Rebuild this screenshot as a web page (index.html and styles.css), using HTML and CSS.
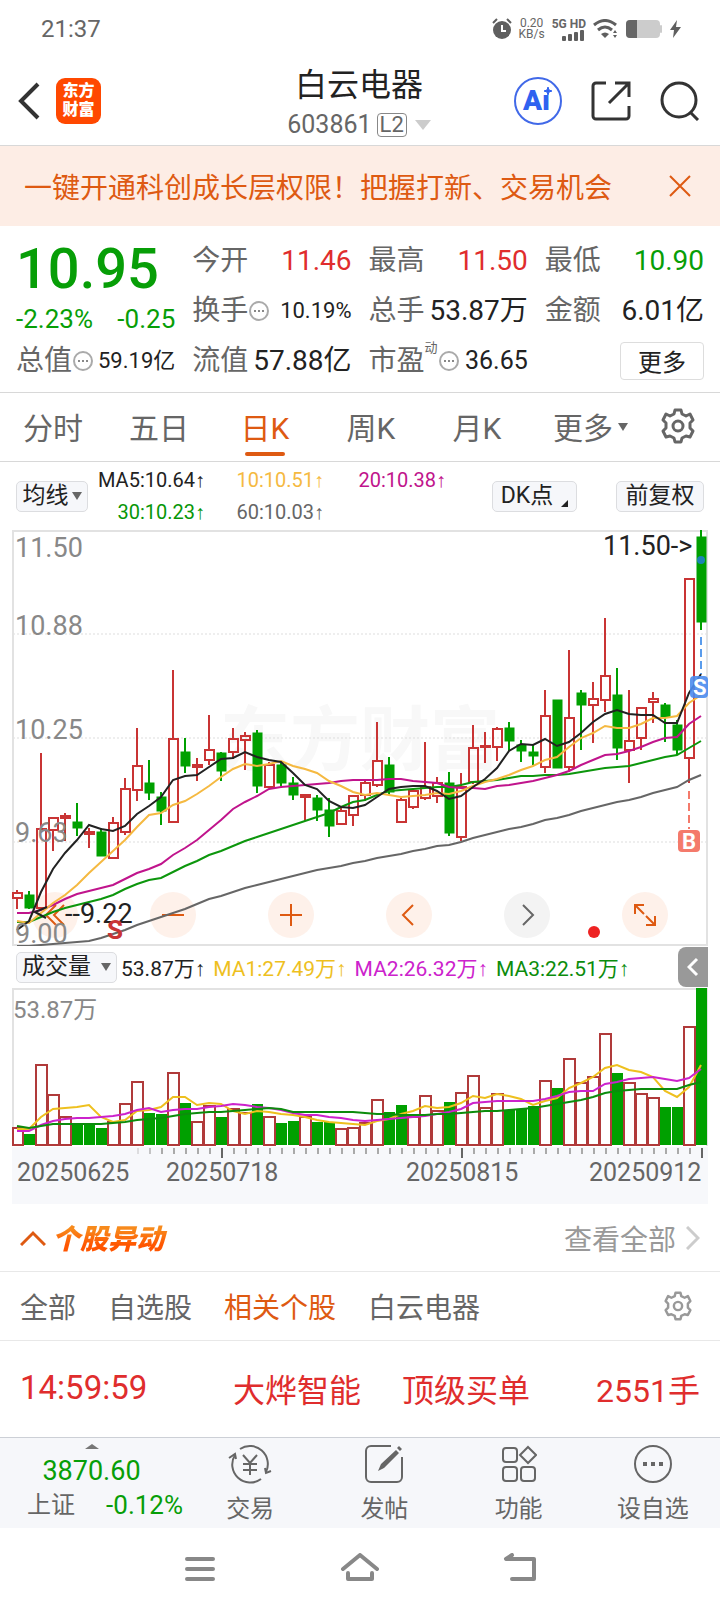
FILE: index.html
```html
<!DOCTYPE html>
<html lang="zh-CN">
<head>
    <meta charset="UTF-8">
    <meta name="viewport" content="width=device-width, initial-scale=1.0">
    <title>白云电器 603861</title>
    <link rel="stylesheet" href="styles.css">
</head>
<body>
    <div class="status-bar">
        <span class="clock">21:37</span>
        <div class="status-icons">
            <svg width="20" height="22" viewBox="0 0 20 22">
                <circle cx="10" cy="12" r="9" fill="#5f5f5f"/>
                <path d="M1 5l4-4M19 5l-4-4" stroke="#5f5f5f" stroke-width="2" fill="none"/>
                <path d="M10 7v6h4" stroke="#fff" stroke-width="2" fill="none"/>
            </svg>
            <span class="speed">0.20<br>KB/s</span>
            <span class="network">5G HD
                <svg width="25" height="11" viewBox="0 0 25 11" fill="#5f5f5f">
                    <rect x="1" y="6" width="4" height="5" rx="1"/>
                    <rect x="7" y="4" width="4" height="7" rx="1"/>
                    <rect x="13" y="2" width="4" height="9" rx="1"/>
                    <rect x="19" y="0" width="4" height="11" rx="1"/>
                </svg>
            </span>
            <svg width="26" height="20" viewBox="0 0 26 20" fill="none" stroke="#5f5f5f" stroke-width="3">
                <path d="M1 6q11-9 22 0"/>
                <path d="M5 11q7-6 14 0"/>
                <path d="M8 15q4-3 8 0l-4 4z" fill="#5f5f5f" stroke="none"/>
                <path d="M22 11l2 3h-4zM22 19l2-3h-4z" fill="#5f5f5f" stroke="none"/>
            </svg>
            <svg width="37" height="18" viewBox="0 0 37 18">
                <rect x="0" y="0" width="34" height="18" rx="4" fill="#ccc"/>
                <rect x="34" y="5" width="2" height="8" rx="1" fill="#ccc"/>
                <path d="M4 0h7v18H4a4 4 0 0 1-4-4V4a4 4 0 0 1 4-4z" fill="#666"/>
            </svg>
            <svg width="11" height="18" viewBox="0 0 11 18"><path d="M7 0L0 10h4l-1 8 8-11H6z" fill="#5f5f5f"/></svg>
        </div>
    </div>

    <header class="header">
        <div class="header-left">
            <button class="icon-button" aria-label="返回">
                <svg width="22" height="38" viewBox="0 0 22 38"><path d="M20 2L3 19l17 17" fill="none" stroke="#333" stroke-width="4"/></svg>
            </button>
            <a class="logo" href="#">东方<br>财富</a>
        </div>
        <div class="stock">
            <h1 class="stock-name">白云电器</h1>
            <button class="stock-code">603861<span class="level">L2</span><span class="triangle light"></span></button>
        </div>
        <div class="header-right">
            <button class="icon-button ai" aria-label="Ai">
                <svg width="48" height="48" viewBox="0 0 48 48">
                    <circle cx="24" cy="24" r="23" fill="#fff" stroke="#4169e8" stroke-width="2"/>
                    <text x="9" y="33" class="ai-text">Aı</text>
                    <path d="M34 10l1 3 3 1-3 1-1 3-1-3-3-1 3-1z" fill="#2f62f0" stroke="#2f62f0"/>
                </svg>
            </button>
            <button class="icon-button" aria-label="分享">
                <svg width="40" height="40" viewBox="0 0 40 40" fill="none" stroke="#333" stroke-width="3">
                    <path d="M15 2H5a3 3 0 0 0-3 3v30a3 3 0 0 0 3 3h30a3 3 0 0 0 3-3V25"/>
                    <path d="M24 2h14v14M37 3L18 22"/>
                </svg>
            </button>
            <button class="icon-button" aria-label="搜索">
                <svg width="40" height="40" viewBox="0 0 40 40" fill="none" stroke="#333" stroke-width="3">
                    <circle cx="19" cy="19" r="17"/>
                    <path d="M30 31l8 8"/>
                </svg>
            </button>
        </div>
    </header>

    <div class="banner">
        <a href="#">一键开通科创成长层权限！把握打新、交易机会</a>
        <button class="icon-button" aria-label="关闭">
            <svg width="24" height="24" viewBox="0 0 24 24"><path d="M2 2l20 20M22 2L2 22" stroke="#de5a12" stroke-width="2"/></svg>
        </button>
    </div>

    <section class="quote">
        <div class="price">
            <strong class="last">10.95</strong>
            <div class="change"><span>-2.23%</span><span>-0.25</span></div>
        </div>
        <div class="item"><span>今开</span><b class="up">11.46</b></div>
        <div class="item"><span>最高</span><b class="up">11.50</b></div>
        <div class="item"><span>最低</span><b class="down">10.90</b></div>
        <div class="item"><span>换手<i class="info"></i></span><b class="small">10.19%</b></div>
        <div class="item"><span>总手</span><b>53.87万</b></div>
        <div class="item"><span>金额</span><b>6.01亿</b></div>
        <div class="item"><span>总值<i class="info"></i></span><b class="small">59.19亿</b></div>
        <div class="item"><span>流值</span><b>57.88亿</b></div>
        <div class="item"><span>市盈<sup>动</sup><i class="info"></i></span><b class="medium">36.65</b></div>
        <div class="item end"><button class="more-button">更多</button></div>
    </section>

    <nav class="tabs">
        <button class="tab">分时</button>
        <button class="tab">五日</button>
        <button class="tab active">日K</button>
        <button class="tab">周K</button>
        <button class="tab">月K</button>
        <button class="tab">更多<span class="triangle tiny"></span></button>
        <button class="icon-button tab-setting" aria-label="设置">
            <svg width="34" height="36" viewBox="0 0 34 36" fill="none" stroke="#666" stroke-width="3" stroke-linejoin="round">
                <path d="M14 2h6l1 4 4 2 4-2 3 6-3 3v5l3 3-3 6-4-1-4 2-1 4h-6l-1-4-4-2-4 1-3-6 3-3v-5l-3-3 3-6 4 2 4-2z"/>
                <circle cx="17" cy="18" r="5"/>
            </svg>
        </button>
    </nav>

    <div class="ma-bar">
        <label class="picker">
            <select aria-label="指标"><option>均线</option></select>
            <span class="triangle"></span>
        </label>
        <div class="ma-values">
            <span class="ma5">MA5:10.64↑</span>
            <span class="ma10">10:10.51↑</span>
            <span class="ma20">20:10.38↑</span>
            <span class="ma30">30:10.23↑</span>
            <span class="ma60">60:10.03↑</span>
        </div>
        <button class="box-button dk">DK点<span class="corner"></span></button>
        <button class="box-button">前复权</button>
    </div>

    <div class="chart">
        <div class="controls">
            <button class="control" aria-label="最早">
                <svg width="22" height="22" viewBox="0 0 22 22"><path d="M12 1L2 11l10 10M20 1L10 11l10 10"/></svg>
            </button>
            <button class="control" aria-label="缩小">
                <svg width="22" height="22" viewBox="0 0 22 22"><path d="M0 11h22"/></svg>
            </button>
            <button class="control" aria-label="放大">
                <svg width="22" height="22" viewBox="0 0 22 22"><path d="M0 11h22M11 0v22"/></svg>
            </button>
            <button class="control" aria-label="左移">
                <svg width="22" height="22" viewBox="0 0 22 22"><path d="M15 1L5 11l10 10"/></svg>
            </button>
            <button class="control gray" aria-label="右移">
                <svg width="22" height="22" viewBox="0 0 22 22"><path d="M7 1l10 10L7 21"/></svg>
            </button>
            <button class="control" aria-label="全屏">
                <svg width="22" height="22" viewBox="0 0 22 22"><path d="M1 10V1h9M1 1l9 9M12 21h9v-9M21 21l-9-9"/></svg>
            </button>
        </div>
        <svg class="plot k-plot" viewBox="0 0 696 416">
            <text class="watermark" x="208" y="235">东方财富</text>
            <path class="grid" d="M1 104H694M1 208H694M1 312H694"/>
            <path class="frame" d="M1 416V1H695V415H1"/>
            <g id="candles"></g>
            <g id="ma-lines"></g>
            <g class="axis-label">
                <text x="3" y="27">11.50</text>
                <text x="3" y="105">10.88</text>
                <text x="3" y="209">10.25</text>
                <text x="3" y="312">9.63</text>
                <text x="3" y="413">9.00</text>
            </g>
            <text class="mark" x="591" y="25">11.50-&gt;</text>
            <text class="mark" x="53" y="393">--9.22</text>
            <path d="M35 377l-12 5 11 6" fill="none" stroke="#222" stroke-width="2"/>
            <text class="s-mark" x="95" y="409">S</text>
            <circle cx="689" cy="30" r="4" fill="#1c84b4"/>
            <path d="M689 107v37" stroke="#5a9cec" stroke-width="2" stroke-dasharray="8 4"/>
            <rect x="678" y="146" width="18" height="22" rx="4" fill="#4a8cee" fill-opacity=".9"/>
            <text class="tag" x="681" y="165">S</text>
            <path d="M677 261v38" stroke="#f47a6b" stroke-width="2" stroke-dasharray="8 4"/>
            <rect x="666" y="300" width="22" height="22" rx="4" fill="#f47a6b"/>
            <text class="tag" x="670" y="319">B</text>
            <circle cx="582" cy="402" r="6" fill="#ee2222"/>
        </svg>
    </div>

    <div class="volume-bar">
        <label class="picker wide">
            <select aria-label="副图"><option>成交量</option></select>
            <span class="triangle"></span>
        </label>
        <span>53.87万↑</span>
        <span class="vol1">MA1:27.49万↑</span>
        <span class="vol2">MA2:26.32万↑</span>
        <span class="vol3">MA3:22.51万↑</span>
        <button class="collapse" aria-label="展开">
            <svg width="12" height="20" viewBox="0 0 12 20"><path d="M10 2L2 10l8 8" fill="none" stroke="#fff" stroke-width="3"/></svg>
        </button>
    </div>

    <div class="volume">
        <svg class="plot" viewBox="0 0 696 216">
            <rect x="0" y="159" width="696" height="57" fill="#f7f8fb"/>
            <path class="frame" d="M1 158V1H695V158"/>
            <text class="vol-label" x="1" y="30">53.87万</text>
            <g id="volumes"></g>
            <g id="vol-lines"></g>
            <g id="ticks"></g>
            <g class="date">
                <text x="5" y="193">20250625</text>
                <text x="154" y="193">20250718</text>
                <text x="394" y="193">20250815</text>
                <text x="577" y="193">20250912</text>
            </g>
        </svg>
    </div>

    <div class="section-head">
        <svg width="26" height="16" viewBox="0 0 26 16"><path d="M1 15L13 3l12 12" fill="none" stroke="#de5a12" stroke-width="3"/></svg>
        <h2 class="section-title">个股异动</h2>
        <a class="view-all" href="#">查看全部
            <svg width="14" height="24" viewBox="0 0 14 24"><path d="M1 1l11 11L1 23" fill="none" stroke="#ccc" stroke-width="3"/></svg>
        </a>
    </div>

    <nav class="filters">
        <button>全部</button>
        <button>自选股</button>
        <button class="active">相关个股</button>
        <button>白云电器</button>
        <button class="icon-button filter-setting" aria-label="设置">
            <svg width="28" height="30" viewBox="0 0 34 36" fill="none" stroke="#999" stroke-width="3" stroke-linejoin="round">
                <path d="M14 2h6l1 4 4 2 4-2 3 6-3 3v5l3 3-3 6-4-1-4 2-1 4h-6l-1-4-4-2-4 1-3-6 3-3v-5l-3-3 3-6 4 2 4-2z"/>
                <circle cx="17" cy="18" r="5"/>
            </svg>
        </button>
    </nav>

    <div class="trade">
        <span class="time">14:59:59</span>
        <span>大烨智能</span>
        <span>顶级买单</span>
        <span>2551手</span>
    </div>

    <footer class="footer">
        <a class="index" href="#">
            <span class="triangle upward"></span>
            <span class="index-value">3870.60</span>
            <span class="index-row"><span class="index-name">上证</span><span>-0.12%</span></span>
        </a>
        <a class="action" href="#">
            <svg width="44" height="40" viewBox="0 0 44 40" fill="none" stroke="#666" stroke-width="2">
                <path d="M12 5a18 18 0 0 1 26 23M33 35A18 18 0 0 1 7 11"/>
                <path d="M1 14l6-4 1 5M43 27l-5 2-1-5"/>
                <path d="M15 11l7 8 7-8M22 19v12M15 20h14M15 26h14"/>
            </svg>
            交易
        </a>
        <a class="action" href="#">
            <svg width="40" height="40" viewBox="0 0 40 40" fill="none" stroke="#666" stroke-width="2">
                <path d="M27 2H7a5 5 0 0 0-5 5v26a5 5 0 0 0 5 5h26a5 5 0 0 0 5-5V13"/>
                <path d="M14 27l3-7L32 6l3 3-15 15zM33 4l2-2 3 3-2 2z" fill="#666" stroke="none"/>
            </svg>
            发帖
        </a>
        <a class="action" href="#">
            <svg width="36" height="40" viewBox="0 0 36 40" fill="none" stroke="#666" stroke-width="2">
                <rect x="2" y="4" width="14" height="14" rx="3"/>
                <rect x="2" y="23" width="14" height="14" rx="3"/>
                <rect x="20" y="23" width="14" height="14" rx="3"/>
                <path d="M27 3l8 8-8 8-8-8z"/>
            </svg>
            功能
        </a>
        <a class="action" href="#">
            <svg width="40" height="40" viewBox="0 0 40 40" fill="none" stroke="#666" stroke-width="2">
                <circle cx="20" cy="20" r="18"/>
                <path d="M10 20h4M18 20h4M26 20h4" stroke-width="4"/>
            </svg>
            设自选
        </a>
    </footer>

    <div class="system-nav">
        <button class="icon-button" aria-label="菜单">
            <svg width="40" height="32" viewBox="0 0 40 32" stroke="#888" stroke-width="4" stroke-linecap="round"><path d="M7 6h26M7 16h26M7 26h26"/></svg>
        </button>
        <button class="icon-button" aria-label="主页">
            <svg width="40" height="32" viewBox="0 0 40 32" fill="none" stroke="#888" stroke-width="4" stroke-linecap="round" stroke-linejoin="round">
                <path d="M3 16L20 2l17 14M8 20v6h24v-6"/>
            </svg>
        </button>
        <button class="icon-button" aria-label="后退">
            <svg width="40" height="32" viewBox="0 0 40 32" fill="none" stroke="#888" stroke-width="4" stroke-linecap="round" stroke-linejoin="round">
                <path d="M12 2L6 6h28v20H12"/>
            </svg>
        </button>
    </div>

    <script src="chart.js"></script>
</body>
</html>
```
FILE: styles.css
```css
* {
    box-sizing: border-box;
}
body {
    font-family: Roboto, "Liberation Sans", "Noto Sans CJK SC", sans-serif;
    margin: 0;
    color: #222;
    background-color: #ffffff;
}
button, select {
    font-family: inherit;
    color: inherit;
    background: none;
    border: none;
    padding: 0;
    cursor: pointer;
}
a {
    color: inherit;
    text-decoration: none;
}
svg {
    display: block;
}
.icon-button {
    display: flex;
    align-items: center;
    justify-content: center;
}
.triangle {
    display: inline-block;
    border: 5px solid transparent;
    border-top: 8px solid #666;
    border-bottom: none;
}
.triangle.light {
    border-width: 10px 8px 0;
    border-top-color: #ccc;
    margin-left: 8px;
}
.triangle.tiny {
    position: absolute;
    right: 8px;
    top: 30px;
}
.triangle.upward {
    border: 7px solid transparent;
    border-top: none;
    border-bottom: 5px solid #777;
}

/* status bar */
.status-bar {
    display: flex;
    justify-content: space-between;
    align-items: center;
    height: 56px;
    padding: 2px 39px 0 41px;
    color: #666;
}
.clock {
    font-size: 24px;
}
.status-icons {
    display: flex;
    align-items: center;
    gap: 7px;
}
.speed {
    font-size: 12px;
    line-height: 11px;
    text-align: center;
}
.network {
    display: flex;
    flex-direction: column;
    align-items: flex-end;
    font-size: 12px;
    font-weight: bold;
    line-height: 12px;
}

/* header */
.header {
    display: grid;
    grid-template-columns: 1fr auto 1fr;
    align-items: center;
    height: 90px;
    padding: 0 20px 0 18px;
    border-bottom: 1px solid #d8d8d8;
}
.header-left {
    display: flex;
    align-items: center;
    gap: 16px;
}
.logo {
    width: 45px;
    height: 46px;
    padding-top: 3px;
    border-radius: 9px;
    background-color: #ff4800;
    color: white;
    font-size: 16px;
    font-weight: 900;
    line-height: 19px;
    text-align: center;
}
.stock {
    padding-top: 6px;
    text-align: center;
}
.stock-name {
    margin: 0;
    font-size: 32px;
    font-weight: normal;
    line-height: 42px;
}
.stock-code {
    display: flex;
    align-items: center;
    font-size: 25px;
    line-height: 38px;
    color: #666;
}
.level {
    margin-left: 5px;
    padding: 0 2px;
    border: 1px solid #888;
    border-radius: 4px;
    font-size: 22px;
    line-height: 22px;
}
.header-right {
    display: flex;
    justify-content: flex-end;
    align-items: center;
    gap: 29px;
}
.ai-text {
    font-size: 28px;
    font-weight: 900;
    fill: #2f62f0;
}

/* banner */
.banner {
    display: flex;
    justify-content: space-between;
    align-items: center;
    height: 80px;
    padding: 0 28px 0 24px;
    background-color: #fdede5;
    color: #de5a12;
    font-size: 28px;
}

/* quote */
.quote {
    display: grid;
    grid-template-columns: repeat(4, 1fr);
    grid-auto-rows: 50px;
    column-gap: 17px;
    padding: 10px 16px 6px;
    border-bottom: 1px solid #d8d8d8;
}
.price {
    grid-row: span 2;
    color: #079e07;
}
.last {
    display: block;
    font-size: 56px;
    font-weight: 500;
    line-height: 67px;
}
.change {
    display: flex;
    justify-content: space-between;
    font-size: 26px;
    line-height: 32px;
}
.item {
    display: flex;
    justify-content: space-between;
    align-items: center;
    white-space: nowrap;
    font-size: 28px;
    line-height: 40px;
    color: #666;
}
.item > span {
    display: flex;
    align-items: center;
}
.item b {
    font-weight: normal;
    color: #222;
}
.item .up {
    color: #e02d2d;
}
.item .down {
    color: #079e07;
}
.item .medium {
    font-size: 25px;
}
.item .small {
    font-size: 22px;
}
.item.end {
    justify-content: flex-end;
}
.item sup {
    align-self: flex-start;
    font-size: 13px;
    line-height: 14px;
}
.info {
    display: flex;
    align-items: center;
    justify-content: center;
    width: 20px;
    height: 20px;
    margin-left: 1px;
    border: 2px solid #aaa;
    border-radius: 50%;
}
.info::before {
    content: "";
    width: 2px;
    height: 2px;
    background-color: #888;
    box-shadow: -4px 0 #888, 4px 0 #888;
}
.more-button {
    width: 84px;
    height: 38px;
    padding-bottom: 4px;
    border: 1px solid #ddd;
    border-radius: 4px;
    font-size: 24px;
    color: #222;
}

/* period tabs */
.tabs {
    display: flex;
    height: 69px;
    border-bottom: 1px solid #d8d8d8;
}
.tab {
    position: relative;
    flex: 1;
    padding-bottom: 2px;
    font-size: 30px;
    color: #666;
}
.tab.active {
    color: #de5a12;
}
.tab.active::after {
    content: "";
    position: absolute;
    left: 50%;
    bottom: 5px;
    width: 40px;
    height: 4px;
    margin-left: -20px;
    border-radius: 2px;
    background-color: #de5a12;
}
.tab-setting {
    width: 84px;
    padding-bottom: 2px;
}

/* moving averages */
.ma-bar {
    display: flex;
    align-items: center;
    height: 68px;
    padding: 0 16px;
}
.picker, .box-button {
    display: flex;
    flex-shrink: 0;
    align-items: center;
    justify-content: center;
    height: 31px;
    border: 1px solid #dcdde0;
    border-radius: 5px;
    background-color: #f6f7fa;
    font-size: 23px;
    line-height: 28px;
}
.picker {
    width: 72px;
    gap: 3px;
}
.picker.wide {
    width: 101px;
    gap: 10px;
}
.picker select {
    appearance: none;
    font-size: 23px;
    line-height: 28px;
}
.ma-values {
    display: grid;
    grid-template-columns: 117px 119px 122px;
    justify-items: end;
    flex: 1;
    font-size: 20px;
    line-height: 32px;
}
.ma10 {
    color: #f5b941;
}
.ma20 {
    color: #c0148c;
}
.ma30 {
    color: #079607;
}
.ma60 {
    color: #666;
}
.box-button {
    width: 88px;
}
.box-button.dk {
    width: 85px;
    margin-right: 39px;
    gap: 8px;
}
.corner {
    align-self: flex-end;
    margin-bottom: 4px;
    border-left: 7px solid transparent;
    border-bottom: 7px solid #222;
}

/* k line chart */
.chart {
    position: relative;
    margin: 0 12px;
}
.plot {
    width: 100%;
    height: auto;
}
/* prices stay readable over the round buttons */
.k-plot {
    position: relative;
    pointer-events: none;
}
.plot text {
    font-family: Roboto, "Noto Sans CJK SC", sans-serif;
}
.frame {
    fill: none;
    stroke: #e2e2e2;
    stroke-width: 2;
}
.grid {
    stroke: #dddddd;
    stroke-dasharray: 2 2;
}
.watermark {
    font-size: 70px;
    font-weight: bold;
    fill: #f8f8f8;
}
.axis-label {
    font-size: 27px;
    fill: #888;
}
.mark {
    font-size: 27px;
    fill: #222;
}
.s-mark {
    font-size: 26px;
    font-weight: bold;
    fill: #c93434;
}
.tag {
    font-size: 22px;
    font-weight: bold;
    fill: #ffffff;
}
.line {
    fill: none;
    stroke-width: 2;
}
.controls {
    position: absolute;
    left: 20px;
    right: 40px;
    bottom: 8px;
    display: flex;
    justify-content: space-between;
}
.control {
    display: flex;
    align-items: center;
    justify-content: center;
    width: 46px;
    height: 46px;
    border-radius: 50%;
    background-color: #fef1ea;
}
.control svg {
    fill: none;
    stroke: #de5a12;
    stroke-width: 2;
}
.control.gray {
    background-color: #f3f3f3;
}
.control.gray svg {
    stroke: #666;
}

/* volume */
.volume-bar {
    display: flex;
    align-items: center;
    gap: 8px;
    height: 42px;
    margin: 0 12px;
    padding-left: 4px;
    font-size: 21px;
    white-space: nowrap;
}
.volume-bar .picker {
    margin-right: -4px;
}
.vol1 {
    color: #eec01e;
}
.vol2 {
    color: #cc22cc;
}
.vol3 {
    color: #0c8c0c;
}
.collapse {
    display: flex;
    align-items: center;
    justify-content: center;
    width: 30px;
    height: 40px;
    margin-left: auto;
    border-radius: 8px 0 0 8px;
    background-color: #999;
}
.volume {
    margin: 0 12px;
}
.vol-label {
    font-size: 24px;
    fill: #888;
}
.date {
    font-size: 25px;
    fill: #666;
}

/* stock moves */
.section-head {
    display: flex;
    align-items: center;
    height: 68px;
    padding: 0 20px;
    border-bottom: 1px solid #e8e8e8;
}
.section-title {
    margin: 0 0 2px 6px;
    padding-right: 6px;
    font-size: 28px;
    font-weight: 900;
    font-style: italic;
    background: linear-gradient(#f78a1c 30%, #ff5500 70%);
    background-clip: text;
    -webkit-background-clip: text;
    color: transparent;
}
.view-all {
    display: flex;
    align-items: center;
    gap: 10px;
    margin-left: auto;
    font-size: 28px;
    color: #999;
}
.filters {
    display: flex;
    align-items: center;
    gap: 32px;
    height: 69px;
    padding: 0 28px 0 20px;
    border-bottom: 1px solid #e8e8e8;
}
.filters button {
    font-size: 28px;
    color: #666;
}
.filters .active {
    color: #de5a12;
}
.filters .filter-setting {
    margin-left: auto;
}
.trade {
    display: grid;
    grid-template-columns: 213px 169px 1fr auto;
    align-items: center;
    height: 96px;
    padding: 0 20px 3px;
    font-size: 32px;
    color: #e02d2d;
}
.time {
    font-size: 33px;
}

/* footer */
.footer {
    display: flex;
    height: 91px;
    border-top: 1px solid #ccd0d6;
    background-color: #f6f7fa;
    color: #666;
}
.index {
    display: flex;
    flex-direction: column;
    align-items: center;
    width: 183px;
    padding-top: 6px;
    font-size: 26px;
    line-height: 34px;
    color: #079e07;
}
.index-value {
    margin-top: 5px;
    font-size: 27px;
}
.index-row {
    display: flex;
    justify-content: space-between;
    width: 100%;
    padding-left: 27px;
}
.index-name {
    font-size: 24px;
    color: #666;
}
.action {
    flex: 1;
    display: flex;
    flex-direction: column;
    align-items: center;
    gap: 8px;
    padding-top: 6px;
    font-size: 24px;
    line-height: 34px;
}
.system-nav {
    display: flex;
    justify-content: center;
    gap: 120px;
    padding: 25px 0 27px;
}
```
FILE: chart.js
```js
const NS = 'http://www.w3.org/2000/svg';
const STEP = 12;
const START = 5;
const RED = '#c93434';
const GREEN = '#00a000';

// [up or down, high, body top, body bottom, low]
const candles = [
    ['r', 360, 363, 368, 379], ['g', 361, 365, 378, 379], ['r', 223, 299, 378, 378], ['r', 287, 288, 300, 321],
    ['r', 283, 286, 288, 311], ['g', 273, 292, 298, 306], ['r', 298, 302, 304, 318], ['g', 298, 302, 326, 326],
    ['r', 287, 293, 328, 328], ['r', 248, 259, 302, 305], ['r', 198, 236, 260, 271], ['g', 230, 253, 263, 270],
    ['g', 262, 267, 281, 295], ['r', 140, 209, 292, 292], ['g', 208, 222, 236, 243], ['r', 228, 235, 237, 251],
    ['r', 185, 220, 230, 235], ['g', 222, 223, 241, 251], ['r', 198, 209, 222, 229], ['r', 202, 206, 210, 240],
    ['g', 200, 203, 256, 263], ['r', 232, 235, 257, 258], ['g', 232, 235, 253, 256], ['g', 247, 253, 265, 270],
    ['r', 264, 265, 267, 291], ['g', 265, 268, 280, 291], ['g', 268, 280, 296, 307], ['r', 277, 281, 294, 295],
    ['r', 265, 266, 285, 296], ['r', 250, 253, 265, 271], ['r', 192, 231, 255, 257], ['g', 227, 235, 262, 265],
    ['r', 268, 270, 292, 293], ['r', 259, 261, 277, 279], ['r', 212, 257, 268, 270], ['r', 247, 253, 266, 273],
    ['g', 242, 253, 303, 306], ['r', 243, 257, 307, 311], ['r', 195, 218, 252, 254], ['r', 202, 216, 217, 233],
    ['r', 197, 199, 217, 231], ['g', 192, 198, 211, 221], ['g', 210, 215, 221, 232], ['g', 214, 222, 226, 235],
    ['r', 160, 186, 237, 243], ['g', 170, 170, 238, 238], ['r', 120, 188, 237, 242], ['g', 160, 163, 175, 220],
    ['r', 152, 169, 175, 213], ['r', 88, 146, 170, 182], ['g', 138, 165, 218, 230], ['r', 160, 211, 220, 253],
    ['r', 177, 178, 208, 220], ['r', 162, 169, 172, 193], ['g', 173, 175, 187, 212], ['g', 190, 195, 220, 225],
    ['r', 49, 49, 228, 253], ['g', 0, 7, 92, 100]
];

const averages = {
    '#666666': [416, 416, 415, 414, 413, 412, 411, 408, 404, 400, 395, 391, 387, 383, 379, 374, 369, 366, 362, 358, 355, 352, 349, 346, 343, 340, 338, 336, 333, 331, 328, 326, 324, 321, 319, 316, 315, 312, 308, 305, 302, 299, 297, 294, 290, 288, 285, 281, 278, 275, 272, 270, 267, 263, 260, 257, 250, 245],
    '#0c960c': [392, 392, 387, 382, 378, 375, 372, 369, 365, 359, 354, 350, 348, 342, 336, 331, 325, 321, 316, 311, 307, 303, 299, 295, 291, 287, 283, 277, 272, 270, 265, 261, 260, 259, 258, 257, 257, 255, 252, 251, 250, 248, 246, 246, 245, 245, 244, 242, 240, 238, 237, 236, 233, 230, 227, 225, 218, 211],
    '#c0148c': [383, 383, 380, 375, 369, 364, 361, 358, 355, 349, 343, 339, 334, 325, 318, 310, 300, 290, 279, 272, 266, 259, 257, 256, 255, 254, 253, 251, 250, 250, 250, 249, 249, 251, 252, 253, 257, 258, 258, 259, 256, 255, 253, 251, 248, 245, 241, 235, 230, 225, 224, 221, 217, 212, 208, 207, 194, 186],
    '#f5b941': [391, 393, 383, 373, 365, 355, 343, 332, 321, 310, 297, 285, 283, 275, 271, 264, 256, 247, 239, 234, 236, 234, 231, 236, 239, 243, 251, 256, 262, 265, 263, 265, 267, 266, 265, 263, 264, 261, 256, 252, 249, 245, 240, 236, 230, 227, 217, 208, 203, 196, 198, 198, 194, 188, 188, 186, 173, 165],
    '#222222': [400, 391, 362, 339, 323, 310, 295, 299, 301, 296, 284, 276, 267, 250, 246, 245, 237, 229, 228, 222, 227, 230, 232, 243, 255, 259, 271, 277, 278, 275, 267, 259, 257, 256, 256, 261, 269, 266, 257, 249, 238, 221, 214, 215, 209, 216, 212, 203, 192, 184, 180, 184, 185, 185, 193, 193, 163, 144]
};

const volumes = [140, 146, 77, 107, 129, 136, 135, 140, 134, 116, 94, 125, 126, 85, 115, 134, 118, 129, 121, 125, 116, 129, 135, 133, 129, 134, 134, 141, 140, 135, 112, 124, 117, 129, 108, 123, 114, 105, 88, 120, 106, 122, 121, 118, 93, 100, 71, 95, 89, 46, 85, 95, 106, 110, 119, 119, 39, 0];
const volumeDown = [1, 5, 6, 7, 11, 12, 14, 17, 20, 22, 23, 25, 26, 31, 32, 36, 41, 42, 43, 45, 50, 54, 55, 57];

const volumeAverages = {
    '#eec01e': [141, 141, 129, 121, 120, 119, 117, 129, 134, 132, 123, 122, 119, 109, 109, 117, 115, 116, 123, 126, 123, 124, 126, 127, 129, 132, 134, 135, 136, 137, 133, 131, 126, 123, 118, 120, 119, 115, 108, 110, 106, 108, 111, 117, 113, 110, 100, 95, 89, 80, 77, 82, 84, 89, 103, 109, 99, 77],
    '#cc22cc': [143, 143, 137, 133, 131, 130, 130, 129, 128, 126, 122, 120, 124, 122, 121, 121, 119, 118, 116, 117, 119, 120, 122, 125, 127, 127, 129, 130, 132, 133, 132, 131, 130, 129, 128, 126, 124, 121, 115, 114, 113, 113, 113, 113, 111, 108, 104, 103, 103, 96, 94, 91, 90, 89, 91, 93, 90, 81],
    '#0c8c0c': [138, 140, 138, 136, 136, 136, 136, 136, 135, 134, 132, 131, 130, 128, 126, 125, 124, 124, 123, 122, 121, 120, 121, 124, 124, 124, 124, 124, 124, 125, 126, 126, 127, 127, 127, 126, 126, 125, 124, 123, 123, 122, 121, 120, 118, 116, 114, 112, 109, 105, 103, 102, 101, 101, 101, 101, 97, 94]
};

function add(parent, tag, attrs) {
    const el = document.createElementNS(NS, tag);
    for (const key in attrs) {
        el.setAttribute(key, attrs[key]);
    }
    document.getElementById(parent).appendChild(el);
}

function drawLines(parent, lines) {
    for (const color in lines) {
        const points = lines[color].map((y, i) => (START + i * STEP) + ',' + y).join(' ');
        add(parent, 'polyline', { class: 'line', points: points, stroke: color });
    }
}

candles.forEach(([type, high, top, bottom, low], i) => {
    const x = START + i * STEP;
    const color = type === 'r' ? RED : GREEN;
    const left = Math.max(x - 4, 0);
    add('candles', 'path', { d: `M${x} ${high}V${top}M${x} ${bottom}V${low}`, stroke: color, 'stroke-width': 2 });
    add('candles', 'rect', {
        x: left, y: top, width: x + 5 - left, height: Math.max(bottom - top, 1),
        fill: type === 'r' ? 'none' : color, stroke: color, 'stroke-width': type === 'r' ? 2 : 1
    });
});
drawLines('ma-lines', averages);

volumes.forEach((top, i) => {
    const x = START + i * STEP;
    const down = volumeDown.includes(i);
    const left = Math.max(x - 5, 1);
    add('volumes', 'rect', {
        x: left, y: top, width: x + 6 - left, height: 157 - top,
        fill: down ? GREEN : '#ffffff', stroke: down ? 'none' : '#b03a3a', 'stroke-width': 2
    });
});
drawLines('vol-lines', volumeAverages);

// longer ticks stand above the dates
for (let i = 10; i < 58; i++) {
    const x = START + 1 + i * STEP;
    const major = i === 17 || i === 37 || i === 57;
    add('ticks', 'path', {
        d: `M${x} 160v${major ? 10 : 6}`, stroke: major ? '#666' : '#aaa', 'stroke-width': 2,
        opacity: i < 12 ? (i - 9) / 3 : 1
    });
}
```
